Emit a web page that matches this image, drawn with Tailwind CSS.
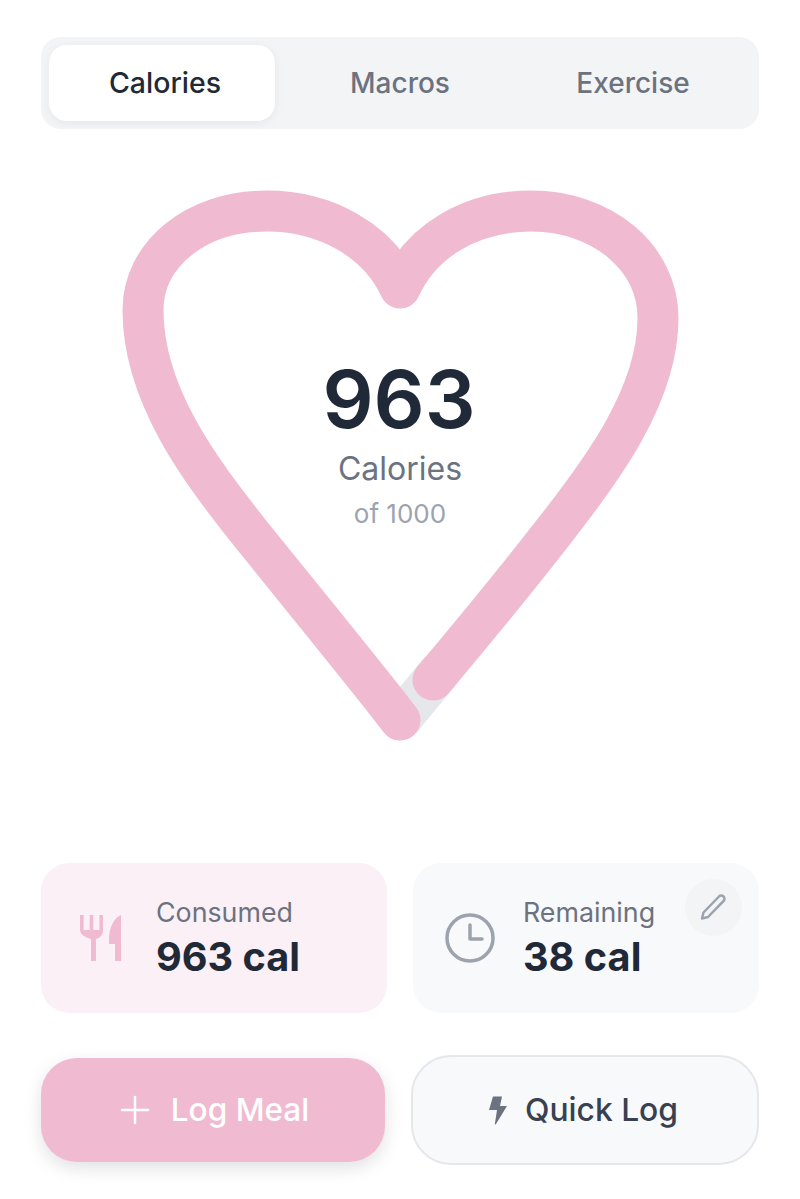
<!DOCTYPE html>
<html lang="en">
<head>
  <meta charset="UTF-8" />
  <meta name="viewport" content="width=device-width, initial-scale=1" />
  <title>Calories</title>
  <script src="https://cdn.jsdelivr.net/npm/@tailwindcss/browser@4"></script>
</head>
<body class="bg-white font-['Inter',sans-serif] h-[1199px] w-[800px] overflow-hidden">
  <div class="px-[41px] pt-[37px]">
    <!-- tabs -->
    <div class="h-[92px] rounded-[20px] bg-[#f3f4f6] p-2 grid grid-cols-[226px_250px_226px] text-[28px] font-medium">
      <div class="rounded-[18px] bg-white shadow-[0_2px_10px_rgba(0,0,0,0.06)] flex items-center justify-center pl-[6px] text-[28.5px] text-[#1f2937]">Calories</div>
      <div class="flex items-center justify-center text-[#6b7280]">Macros</div>
      <div class="flex items-center justify-center pr-[10px] text-[#6b7280]">Exercise</div>
    </div>

    <!-- heart -->
    <div class="relative h-[734px]">
      <svg class="block" width="718" height="734" viewBox="41 129 718 734" fill="none" stroke-width="41" stroke-linecap="round" stroke-linejoin="round">
        <path d="M400 720 L441 670" stroke="#e5e7eb" stroke-linecap="butt" stroke-width="42" />
        <path stroke="#f0bbd0" d="M400 720 C376 688 300 595 250 533 C200 470 143 395 143 310 C143 255 195 211 267 211 C325 211 378 240 400 288 C422 240 472 211 531 211 C603 211 658 258 658 318 C658 395 602 470 555 530 C520 575 470 636 433 680" />
      </svg>
      <div class="absolute left-0 right-0 top-[226px] flex flex-col items-center">
        <div class="text-[80px] leading-[88px] font-semibold text-[#1f2937] -ml-[2px]">963</div>
        <div class="text-[32px] leading-[38px] text-[#6b7280] mt-[7px]">Calories</div>
        <div class="text-[26px] leading-[32px] text-[#9ca3af] mt-[10px]">of 1000</div>
      </div>
    </div>

    <!-- stat cards -->
    <div class="grid grid-cols-[346px_346px] gap-[26px]">
      <div class="h-[150px] rounded-[28px] bg-[#fbf0f6] flex items-center pl-[38px]">
        <svg class="w-[42px] h-[46px] shrink-0" viewBox="0 0 42 46" fill="#f0bbd0">
          <path d="M1 0h3.600v15h6.100V0h3.600v15h6.100V0H24v15c0 5-3 8-7 9v22h-5V24c-4-1-11-4-11-9z" />
          <path d="M42 0v46h-6V29h-6v-4C30 12 35 3 42 0z" />
        </svg>
        <div class="ml-[35px]">
          <div class="text-[26.8px] leading-[34px] text-[#6b7280] -mt-[2px]">Consumed</div>
          <div class="text-[39.7px] leading-[46px] font-bold text-[#1f2937] mt-[5px]">963 cal</div>
        </div>
      </div>
      <div class="relative h-[150px] rounded-[28px] bg-[#f8f9fb] flex items-center pl-[31px]">
        <svg class="w-[52px] h-[52px] shrink-0" viewBox="0 0 52 52" fill="none" stroke="#9ca3af" stroke-width="3.500" stroke-linecap="round" stroke-linejoin="round">
          <circle cx="26" cy="26" r="23" />
          <path d="M26 13v14h12" />
        </svg>
        <div class="ml-[27px]">
          <div class="text-[26.8px] leading-[34px] text-[#6b7280] -mt-[2px]">Remaining</div>
          <div class="text-[39.7px] leading-[46px] font-bold text-[#1f2937] mt-[5px]">38 cal</div>
        </div>
        <div class="absolute right-[17px] top-[16px] w-[57px] h-[57px] rounded-full bg-[#f3f4f6] flex items-center justify-center">
          <svg class="w-[28px] h-[28px] -ml-[2px] -mt-[2px]" viewBox="0 0 28 28" fill="none" stroke="#9ca3af" stroke-width="2.500" stroke-linecap="round" stroke-linejoin="round">
            <path d="M20 3.500a3 3 0 0 1 4.500 4.500L9 24l-6 1.500L4.500 19.500z" />
          </svg>
        </div>
      </div>
    </div>

    <!-- actions -->
    <div class="grid grid-cols-[344px_348px] gap-[26px] mt-[42px] items-center">
      <button class="h-[104px] rounded-[36px] bg-[#f0bbd0] shadow-[0_6px_18px_rgba(0,0,0,0.12)] flex items-center justify-center gap-[21px] pl-[3px] text-white text-[31.6px] font-medium">
        <svg class="w-[30px] h-[30px]" viewBox="0 0 30 30" fill="none" stroke="white" stroke-width="2.500" stroke-linecap="round"><path d="M15 2v26M2 15h26" /></svg>
        Log Meal
      </button>
      <button class="h-[110px] rounded-[40px] bg-[#f8f9fb] border-2 border-[#e5e7eb] flex items-center justify-center gap-[18px] pr-[3px] text-[#374151] text-[31.8px] font-medium">
        <svg class="w-[18px] h-[29px]" viewBox="0 0 18 29" fill="#6b7280"><path d="M4 0.500H13L11 10H18L7 28Q5.500 29.500 6 27L8 14H0Z" /></svg>
        Quick Log
      </button>
    </div>
  </div>
</body>
</html>
